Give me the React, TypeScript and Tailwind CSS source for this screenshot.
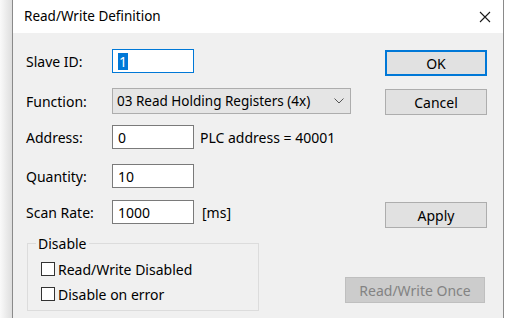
import React from 'react';

const font = { fontFamily: '"Noto Sans", "Open Sans", sans-serif' };

function TextBox({ value, focused }: { value: string; focused?: boolean }) {
  return (
    <div
      className={`w-[82px] h-[24px] bg-white border flex items-center pl-[5px] text-[14px] text-black ${
        focused ? 'border-[#0078d7]' : 'border-[#7a7a7a]'
      }`}
    >
      {focused ? <span className="bg-[#0078d7] text-white px-[1px] leading-[17px]">{value}</span> : value}
    </div>
  );
}

function Button({ label, primary, disabled, w = 'w-[102px]' }: { label: string; primary?: boolean; disabled?: boolean; w?: string }) {
  return (
    <div
      className={`${w} h-[26px] flex items-center justify-center text-[14px] ${
        disabled
          ? 'bg-[#cccccc] border border-[#bfbfbf] text-[#838383]'
          : primary
          ? 'bg-[#e1e1e1] border-2 border-[#0078d7] text-black'
          : 'bg-[#e1e1e1] border border-[#adadad] text-black'
      }`}
    >
      {label}
    </div>
  );
}

function Checkbox({ label }: { label: string }) {
  return (
    <div className="flex items-center gap-[3px] h-[18px]">
      <div className="w-[14px] h-[14px] bg-white border border-[#333333]" />
      <span className="text-[14px] text-black">{label}</span>
    </div>
  );
}

export default function App() {
  return (
    <div className="w-[508px] h-[318px] flex bg-white overflow-hidden" style={font}>
      <div className="w-[12px] h-full bg-gradient-to-r from-[#fafafa] to-[#dedede]" />
      <div className="w-[492px] h-full flex flex-col border-x border-[#8a8a8a]">
        <div className="h-[33px] bg-white flex items-center justify-between pl-[11px] pr-[12px]">
          <span className="text-[13.5px] text-black">Read/Write Definition</span>
          <svg width="12" height="12" viewBox="0 0 12 12" className="mt-[1px]">
            <path d="M1 1 L11 11 M11 1 L1 11" stroke="#1a1a1a" strokeWidth="1.1" fill="none" />
          </svg>
        </div>
        <div className="flex-1 bg-[#f0f0f0] flex flex-col pl-[13px] pr-[16px] pt-[16px] text-[14px] text-black">
          <div className="flex items-start">
            <span className="w-[86px] h-[24px] flex items-center">Slave ID:</span>
            <TextBox value="1" focused />
            <div className="ml-auto mt-[1px]">
              <Button label="OK" primary />
            </div>
          </div>

          <div className="flex items-start mt-[12px]">
            <span className="w-[86px] h-[26px] flex items-center">Function:</span>
            <div className="w-[239px] h-[26px] bg-[#e5e5e5] border border-[#adadad] flex items-center justify-between pl-[4px] pr-[6px]">
              <span className="text-[13.5px]">03 Read Holding Registers (4x)</span>
              <svg width="10" height="6" viewBox="0 0 10 6">
                <path d="M0.5 0.5 L5 5 L9.5 0.5" stroke="#555" strokeWidth="1" fill="none" />
              </svg>
            </div>
            <div className="ml-auto mt-[1px]">
              <Button label="Cancel" />
            </div>
          </div>

          <div className="flex items-center mt-[10px]">
            <span className="w-[86px]">Address:</span>
            <TextBox value="0" />
            <span className="ml-[6px]">PLC address = 40001</span>
          </div>

          <div className="flex items-center mt-[15px]">
            <span className="w-[86px]">Quantity:</span>
            <TextBox value="10" />
          </div>

          <div className="flex items-start mt-[12px]">
            <span className="w-[86px] h-[24px] flex items-center">Scan Rate:</span>
            <TextBox value="1000" />
            <span className="ml-[8px] h-[24px] flex items-center">[ms]</span>
            <div className="ml-auto mt-[2px]">
              <Button label="Apply" />
            </div>
          </div>

          <div className="flex items-start mt-[15px]">
            <div className="w-[232px] h-[68px] ml-[1px] border border-[#dcdcdc] relative flex flex-col pl-[13px] pt-[16px] gap-[7px]">
              <span className="absolute -top-[10px] left-[8px] bg-[#f0f0f0] px-[2px] leading-[19px]">Disable</span>
              <Checkbox label="Read/Write Disabled" />
              <Checkbox label="Disable on error" />
            </div>
            <div className="ml-auto mt-[34px] mr-[2px]">
              <Button label="Read/Write Once" disabled w="w-[140px]" />
            </div>
          </div>
        </div>
      </div>
      <div className="flex-1 h-full bg-white" />
    </div>
  );
}
